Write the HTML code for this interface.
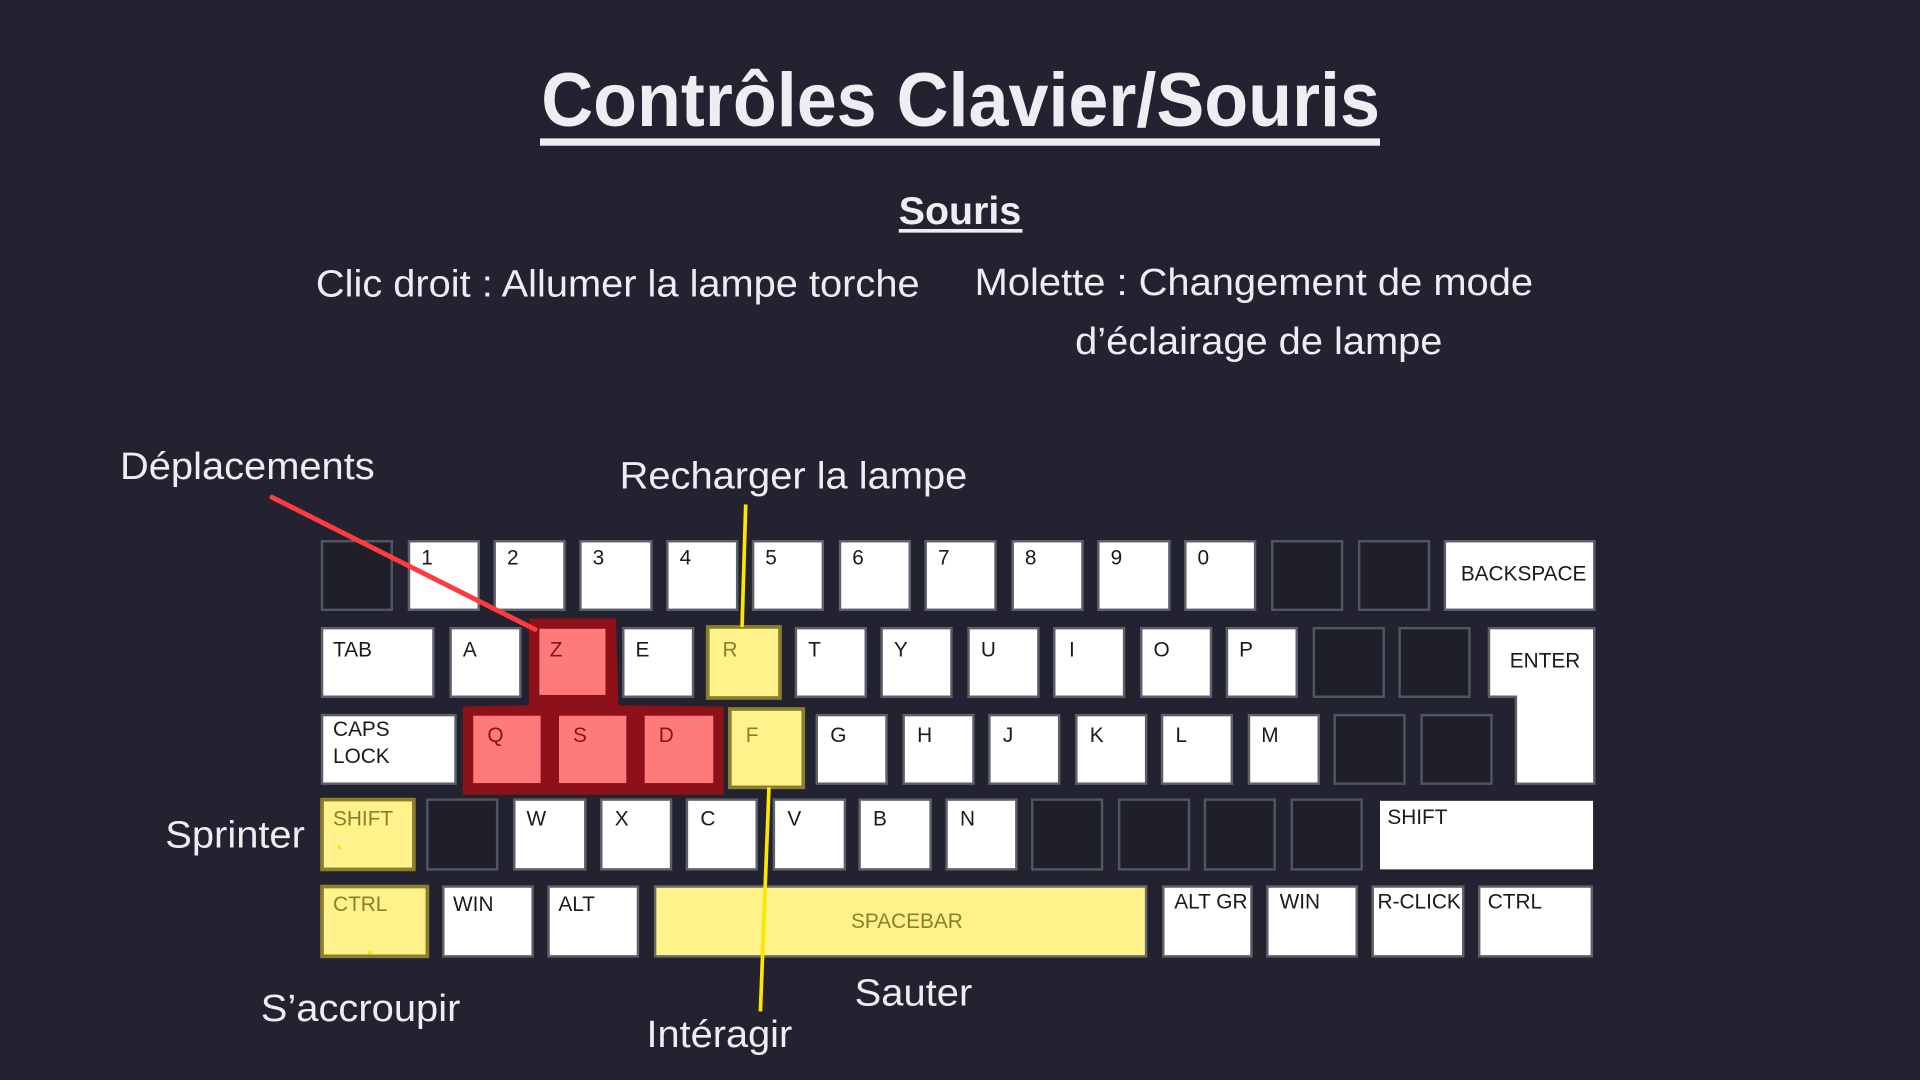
<!DOCTYPE html>
<html><head><meta charset="utf-8"><style>
html,body{margin:0;padding:0;background:#222231;overflow:hidden}
svg{display:block}
text{font-family:"Liberation Sans",sans-serif}
.k{fill:#fff;stroke:#5c6068;stroke-width:2}
.d{fill:#1f1f2c;stroke:#50565c;stroke-width:2}
.r{fill:#ff7b7b;stroke:#8e1019;stroke-width:3}
.y{fill:#fff28a;stroke:#8a7f2c;stroke-width:3}
.t{font-size:17px;fill:#1a1a1a}
.tr{font-size:17px;fill:#8e1019}
.ty{font-size:17px;fill:#8a7f2c}
.h{fill:#eeeef2;font-size:31px}
</style></head><body>
<svg width="1920" height="1080" viewBox="0 0 1568 882" xmlns="http://www.w3.org/2000/svg">
<rect width="1568" height="882" fill="#222231"/>
<text x="442" y="103" font-size="62" font-weight="bold" fill="#eeeef2" textLength="685" lengthAdjust="spacingAndGlyphs">Contrôles Clavier/Souris</text>
<rect x="441" y="113" width="686" height="6" fill="#eeeef2"/>
<text x="734" y="183" font-size="32" font-weight="bold" fill="#eeeef2" textLength="100" lengthAdjust="spacingAndGlyphs">Souris</text>
<rect x="734" y="187" width="101" height="3" fill="#eeeef2"/>
<text class="h" x="258" y="242" textLength="493" lengthAdjust="spacingAndGlyphs">Clic droit : Allumer la lampe torche</text>
<text class="h" x="796" y="241" textLength="456" lengthAdjust="spacingAndGlyphs">Molette : Changement de mode</text>
<text class="h" x="878" y="289" textLength="300" lengthAdjust="spacingAndGlyphs">d’éclairage de lampe</text>
<text class="h" x="98" y="391" textLength="208" lengthAdjust="spacingAndGlyphs">Déplacements</text>
<text class="h" x="506" y="399" textLength="284" lengthAdjust="spacingAndGlyphs">Recharger la lampe</text>
<text class="h" x="135" y="692" textLength="114" lengthAdjust="spacingAndGlyphs">Sprinter</text>
<text class="h" x="213" y="834" textLength="163" lengthAdjust="spacingAndGlyphs">S’accroupir</text>
<text class="h" x="698" y="821" textLength="96" lengthAdjust="spacingAndGlyphs">Sauter</text>
<text class="h" x="528" y="855" textLength="119" lengthAdjust="spacingAndGlyphs">Intéragir</text>

<!-- row1 -->
<rect class="d" x="263" y="442" width="57" height="56"/>
<rect class="k" x="334" y="442" width="57" height="56"/><text class="t" x="344" y="461">1</text>
<rect class="k" x="404" y="442" width="57" height="56"/><text class="t" x="414" y="461">2</text>
<rect class="k" x="474" y="442" width="58" height="56"/><text class="t" x="484" y="461">3</text>
<rect class="k" x="545" y="442" width="57" height="56"/><text class="t" x="555" y="461">4</text>
<rect class="k" x="615" y="442" width="57" height="56"/><text class="t" x="625" y="461">5</text>
<rect class="k" x="686" y="442" width="57" height="56"/><text class="t" x="696" y="461">6</text>
<rect class="k" x="756" y="442" width="57" height="56"/><text class="t" x="766" y="461">7</text>
<rect class="k" x="827" y="442" width="57" height="56"/><text class="t" x="837" y="461">8</text>
<rect class="k" x="897" y="442" width="58" height="56"/><text class="t" x="907" y="461">9</text>
<rect class="k" x="968" y="442" width="57" height="56"/><text class="t" x="978" y="461">0</text>
<rect class="d" x="1039" y="442" width="57" height="56"/>
<rect class="d" x="1110" y="442" width="57" height="56"/>
<rect class="k" x="1180" y="442" width="122" height="56"/><text class="t" x="1193" y="474">BACKSPACE</text>

<!-- red group outline -->
<polygon points="432,505 503,505 505,576 591,577 591,649 378,649 378,577 432,576" fill="#8e1019"/>

<!-- row2 -->
<rect class="k" x="263" y="513" width="91" height="56"/><text class="t" x="272" y="536">TAB</text>
<rect class="k" x="368" y="513" width="57" height="56"/><text class="t" x="378" y="536">A</text>
<rect class="r" x="439" y="512" width="57" height="57"/><text class="tr" x="449" y="536">Z</text>
<rect class="k" x="509" y="513" width="57" height="56"/><text class="t" x="519" y="536">E</text>
<rect class="y" x="578" y="512" width="59" height="58"/><text class="ty" x="590" y="536">R</text>
<rect class="k" x="650" y="513" width="57" height="56"/><text class="t" x="660" y="536">T</text>
<rect class="k" x="720" y="513" width="57" height="56"/><text class="t" x="730" y="536">Y</text>
<rect class="k" x="791" y="513" width="57" height="56"/><text class="t" x="801" y="536">U</text>
<rect class="k" x="861" y="513" width="57" height="56"/><text class="t" x="873" y="536">I</text>
<rect class="k" x="932" y="513" width="57" height="56"/><text class="t" x="942" y="536">O</text>
<rect class="k" x="1002" y="513" width="57" height="56"/><text class="t" x="1012" y="536">P</text>
<rect class="d" x="1073" y="513" width="57" height="56"/>
<rect class="d" x="1143" y="513" width="57" height="56"/>
<polygon class="k" points="1216,513 1302,513 1302,640 1238,640 1238,569 1216,569"/><text class="t" x="1233" y="545">ENTER</text>

<!-- row3 -->
<rect class="k" x="263" y="584" width="109" height="56"/><text class="t" x="272" y="601">CAPS</text><text class="t" x="272" y="623">LOCK</text>
<rect class="r" x="385" y="583" width="58" height="58"/><text class="tr" x="398" y="606">Q</text>
<rect class="r" x="455" y="583" width="58" height="58"/><text class="tr" x="468" y="606">S</text>
<rect class="r" x="525" y="583" width="59" height="58"/><text class="tr" x="538" y="606">D</text>
<rect class="y" x="596" y="579" width="60" height="64"/><text class="ty" x="609" y="606">F</text>
<rect class="k" x="667" y="584" width="57" height="56"/><text class="t" x="678" y="606">G</text>
<rect class="k" x="738" y="584" width="57" height="56"/><text class="t" x="749" y="606">H</text>
<rect class="k" x="808" y="584" width="57" height="56"/><text class="t" x="819" y="606">J</text>
<rect class="k" x="879" y="584" width="57" height="56"/><text class="t" x="890" y="606">K</text>
<rect class="k" x="949" y="584" width="57" height="56"/><text class="t" x="960" y="606">L</text>
<rect class="k" x="1020" y="584" width="57" height="56"/><text class="t" x="1030" y="606">M</text>
<rect class="d" x="1090" y="584" width="57" height="56"/>
<rect class="d" x="1161" y="584" width="57" height="56"/>

<!-- row4 -->
<rect class="y" x="263" y="653" width="75" height="57"/><text class="ty" x="272" y="674">SHIFT</text>
<rect class="d" x="349" y="653" width="57" height="57"/>
<rect class="k" x="420" y="653" width="58" height="57"/><text class="t" x="430" y="674">W</text>
<rect class="k" x="491" y="653" width="57" height="57"/><text class="t" x="502" y="674">X</text>
<rect class="k" x="561" y="653" width="57" height="57"/><text class="t" x="572" y="674">C</text>
<rect class="k" x="632" y="653" width="58" height="57"/><text class="t" x="643" y="674">V</text>
<rect class="k" x="702" y="653" width="58" height="57"/><text class="t" x="713" y="674">B</text>
<rect class="k" x="773" y="653" width="57" height="57"/><text class="t" x="784" y="674">N</text>
<rect class="d" x="843" y="653" width="57" height="57"/>
<rect class="d" x="914" y="653" width="57" height="57"/>
<rect class="d" x="984" y="653" width="57" height="57"/>
<rect class="d" x="1055" y="653" width="57" height="57"/>
<rect x="1127" y="654" width="174" height="56" fill="#fff"/><text class="t" x="1133" y="673">SHIFT</text>

<!-- row5 -->
<rect class="y" x="263" y="724" width="86" height="57"/><text class="ty" x="272" y="744">CTRL</text>
<rect class="k" x="362" y="724" width="73" height="57"/><text class="t" x="370" y="744">WIN</text>
<rect class="k" x="448" y="724" width="73" height="57"/><text class="t" x="456" y="744">ALT</text>
<rect x="535" y="724" width="401" height="57" fill="#fff28a" stroke="#6b6a62" stroke-width="2"/><text class="ty" x="695" y="758">SPACEBAR</text>
<rect class="k" x="950" y="724" width="72" height="57"/><text class="t" x="959" y="742">ALT GR</text>
<rect class="k" x="1035" y="724" width="73" height="57"/><text class="t" x="1045" y="742">WIN</text>
<rect class="k" x="1121" y="724" width="74" height="57"/><text class="t" x="1125" y="742">R-CLICK</text>
<rect class="k" x="1208" y="724" width="92" height="57"/><text class="t" x="1215" y="742">CTRL</text>

<!-- lines -->
<line x1="222" y1="406" x2="437" y2="514" stroke="#ff3b3e" stroke-width="4" stroke-linecap="round"/>
<line x1="609" y1="412" x2="606" y2="512" stroke="#ffe600" stroke-width="3"/>
<line x1="628" y1="643" x2="621" y2="826" stroke="#ffe600" stroke-width="3"/>
<circle cx="277" cy="692" r="1.5" fill="#ffe600"/>
<circle cx="302" cy="778" r="1.5" fill="#ffe600"/>
</svg>
</body></html>
